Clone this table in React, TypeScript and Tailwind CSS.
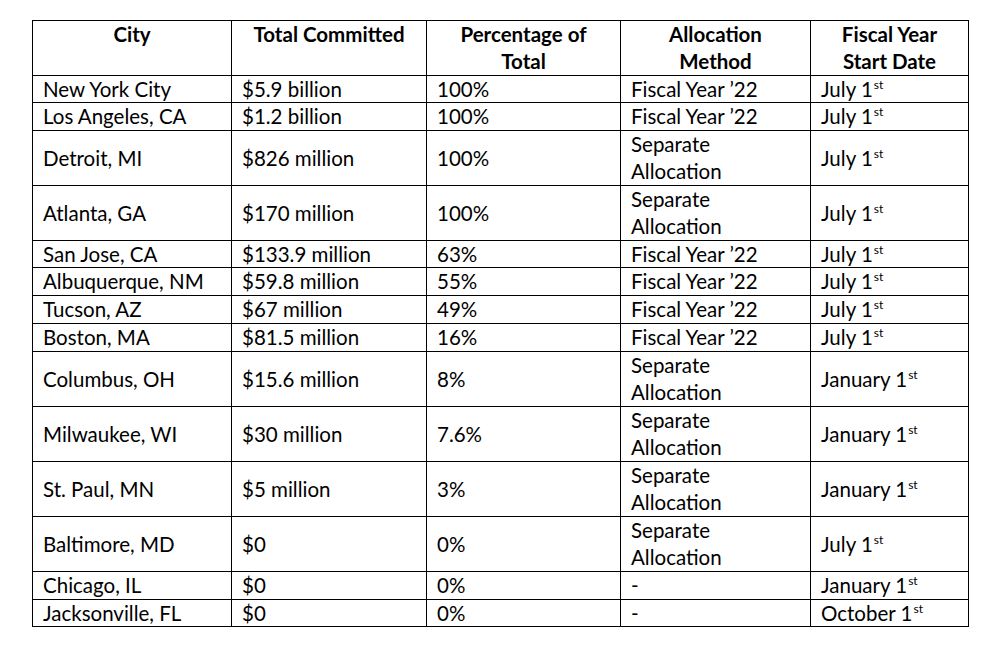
import React from 'react';

interface Row {
  city: string;
  total: string;
  pct: string;
  method: string; // 'fy' | 'sep' | '-'
  start: string;
  tall?: boolean; // single rows that render 1px taller in the source doc
}

const rows: Row[] = [
  { city: 'New York City', total: '$5.9 billion', pct: '100%', method: 'fy', start: 'July 1' },
  { city: 'Los Angeles, CA', total: '$1.2 billion', pct: '100%', method: 'fy', start: 'July 1', tall: true },
  { city: 'Detroit, MI', total: '$826 million', pct: '100%', method: 'sep', start: 'July 1' },
  { city: 'Atlanta, GA', total: '$170 million', pct: '100%', method: 'sep', start: 'July 1' },
  { city: 'San Jose, CA', total: '$133.9 million', pct: '63%', method: 'fy', start: 'July 1' },
  { city: 'Albuquerque, NM', total: '$59.8 million', pct: '55%', method: 'fy', start: 'July 1', tall: true },
  { city: 'Tucson, AZ', total: '$67 million', pct: '49%', method: 'fy', start: 'July 1', tall: true },
  { city: 'Boston, MA', total: '$81.5 million', pct: '16%', method: 'fy', start: 'July 1', tall: true },
  { city: 'Columbus, OH', total: '$15.6 million', pct: '8%', method: 'sep', start: 'January 1' },
  { city: 'Milwaukee, WI', total: '$30 million', pct: '7.6%', method: 'sep', start: 'January 1' },
  { city: 'St. Paul, MN', total: '$5 million', pct: '3%', method: 'sep', start: 'January 1' },
  { city: 'Baltimore, MD', total: '$0', pct: '0%', method: 'sep', start: 'July 1' },
  { city: 'Chicago, IL', total: '$0', pct: '0%', method: '-', start: 'January 1', tall: true },
  { city: 'Jacksonville, FL', total: '$0', pct: '0%', method: '-', start: 'October 1' },
];

const th = 'border border-black align-top text-center font-bold px-[10px] leading-[27px]';
const td = 'border border-black align-middle text-left pl-[10px] pr-1 whitespace-nowrap';

const rowClass = (r: Row) => {
  if (r.method === 'sep') return 'h-[55px] leading-[27px]';
  return r.tall ? 'leading-[27px]' : 'leading-[26px]';
};

const App: React.FC = () => {
  return (
    <div
      className="w-[998px] h-[648px] bg-white pt-[20px] pl-[32px] text-black text-[20.5px]"
      style={{ fontFamily: 'Lato, "Open Sans", sans-serif' }}
    >
      <table className="table-fixed border-collapse w-[936px]">
        <colgroup>
          <col className="w-[199px]" />
          <col className="w-[195px]" />
          <col className="w-[194px]" />
          <col className="w-[190px]" />
          <col className="w-[158px]" />
        </colgroup>
        <thead>
          <tr className="h-[55px]">
            <th className={th}>City</th>
            <th className={th}>Total Committed</th>
            <th className={th}>Percentage of<br />Total</th>
            <th className={th}>Allocation<br />Method</th>
            <th className={th}>Fiscal Year<br />Start Date</th>
          </tr>
        </thead>
        <tbody>
          {rows.map((r, i) => (
            <tr key={i} className={rowClass(r)}>
              <td className={td}>{r.city}</td>
              <td className={td}>{r.total}</td>
              <td className={td}>{r.pct}</td>
              <td className={td}>
                {r.method === 'fy' && 'Fiscal Year ’22'}
                {r.method === 'sep' && (
                  <>Separate<br />Allocation</>
                )}
                {r.method === '-' && '-'}
              </td>
              <td className={td}>
                {r.start}
                <sup className="text-[12px] align-baseline relative top-[-8px] ml-[1px]">st</sup>
              </td>
            </tr>
          ))}
        </tbody>
      </table>
    </div>
  );
};

export default App;
